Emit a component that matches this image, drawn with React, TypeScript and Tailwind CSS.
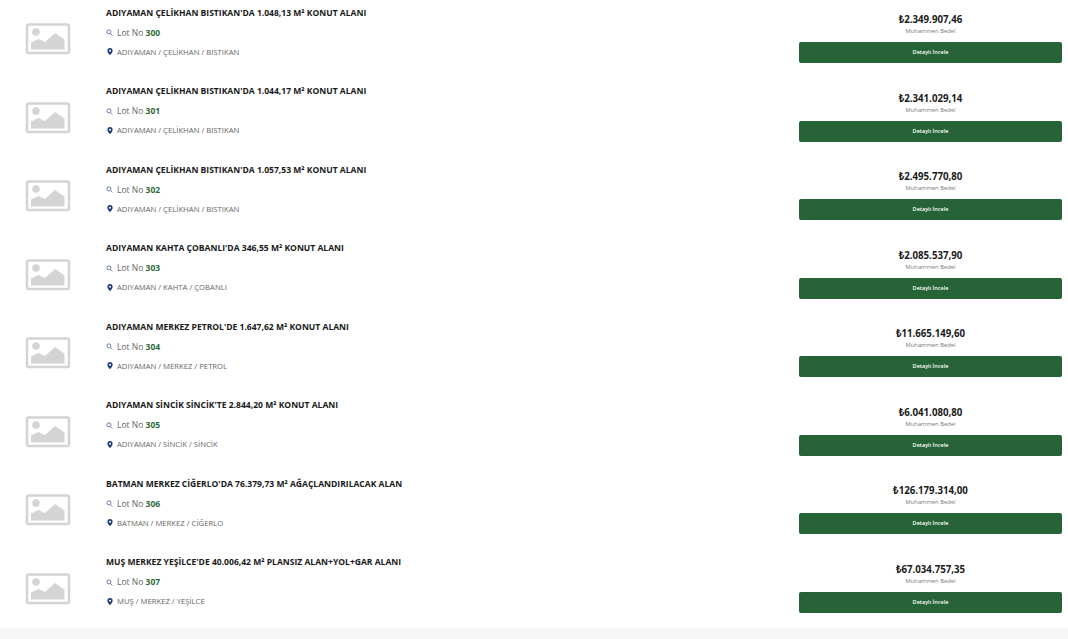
import React from "react";

const rows = [
  ["ADIYAMAN ÇELİKHAN BISTIKAN'DA 1.048,13 M² KONUT ALANI", "300", "ADIYAMAN / ÇELİKHAN / BISTIKAN", "2.349.907,46"],
  ["ADIYAMAN ÇELİKHAN BISTIKAN'DA 1.044,17 M² KONUT ALANI", "301", "ADIYAMAN / ÇELİKHAN / BISTIKAN", "2.341.029,14"],
  ["ADIYAMAN ÇELİKHAN BISTIKAN'DA 1.057,53 M² KONUT ALANI", "302", "ADIYAMAN / ÇELİKHAN / BISTIKAN", "2.495.770,80"],
  ["ADIYAMAN KAHTA ÇOBANLI'DA 346,55 M² KONUT ALANI", "303", "ADIYAMAN / KAHTA / ÇOBANLI", "2.085.537,90"],
  ["ADIYAMAN MERKEZ PETROL'DE 1.647,62 M² KONUT ALANI", "304", "ADIYAMAN / MERKEZ / PETROL", "11.665.149,60"],
  ["ADIYAMAN SİNCİK SİNCİK'TE 2.844,20 M² KONUT ALANI", "305", "ADIYAMAN / SİNCİK / SİNCİK", "6.041.080,80"],
  ["BATMAN MERKEZ CİĞERLO'DA 76.379,73 M² AĞAÇLANDIRILACAK ALAN", "306", "BATMAN / MERKEZ / CİĞERLO", "126.179.314,00"],
  ["MUŞ MERKEZ YEŞİLCE'DE 40.006,42 M² PLANSIZ ALAN+YOL+GAR ALANI", "307", "MUŞ / MERKEZ / YEŞİLCE", "67.034.757,35"],
];

function Placeholder() {
  return (
    <svg width="46" height="32" viewBox="0 0 46 32" className="block">
      <rect x="2" y="1.500" width="42" height="28.500" rx="1.500" fill="#fff" stroke="#d4d4d4" strokeWidth="2.500" />
      <circle cx="11" cy="9" r="3.800" fill="#d4d4d4" />
      <path d="M6 26.500V19.500L13.500 16 20 19 30 10l9.500 6.500v10z" fill="#d4d4d4" />
    </svg>
  );
}

function Row({ title, lot, place, price }: { title: string; lot: string; place: string; price: string }) {
  return (
    <div className="flex h-[78.5px] items-start bg-white">
      <div className="flex w-[106px] shrink-0 pl-[25px] pt-[23px]">
        <Placeholder />
      </div>
      <div className="flex min-w-0 flex-1 flex-col pt-[6.5px]">
        <div className="h-[12px] text-[8.55px] font-bold leading-[12px] text-[#1a1a1a]">{title}</div>
        <div className="mt-[8px] flex h-[12px] items-center text-[8.5px] leading-[12px] text-[#666]">
          <svg width="7" height="7" viewBox="0 0 24 24" fill="none" stroke="#5b6b9a" strokeWidth="3" className="mr-[4px]">
            <circle cx="10" cy="10" r="7" />
            <path d="M15.5 15.5 22 22" />
          </svg>
          <span>Lot No&nbsp;</span>
          <span className="font-bold text-[#2c6b3c]">{lot}</span>
        </div>
        <div className="mt-[7px] flex h-[12px] items-center text-[7.7px] leading-[12px] text-[#666]">
          <svg width="6" height="7" viewBox="0 0 24 28" className="ml-[1px] mr-[4px]">
            <path fillRule="evenodd" d="M12 0a10.500 10.500 0 0 0-10.500 10.500C1.500 18 12 28 12 28s10.500-10 10.500-17.500A10.500 10.500 0 0 0 12 0zm0 14.500a4 4 0 1 1 0-8 4 4 0 0 1 0 8z" fill="#1f3f78" />
          </svg>
          <span>{place}</span>
        </div>
      </div>
      <div className="mr-[6px] flex w-[263px] shrink-0 flex-col items-center pt-[13px]">
        <div className="h-[13px] text-[9.7px] font-bold leading-[13px] text-[#1a1a1a]">
          <span className="font-['Noto_Sans',sans-serif]">₺</span>
          {price}
        </div>
        <div className="mt-[1px] h-[9px] text-[5.8px] leading-[9px] text-[#777]">Muhammen Bedel</div>
        <button className="mt-[6px] flex h-[21px] w-full items-center justify-center rounded-[2px] bg-[#266336] text-[5.5px] font-semibold text-white">
          Detaylı İncele
        </button>
      </div>
    </div>
  );
}

export default function App() {
  return (
    <div className="flex min-h-[639px] flex-col bg-[#f7f7f7] font-['Open_Sans',sans-serif]">
      <div className="h-[627.5px]">
        {rows.map((r) => (
          <Row key={r[1]} title={r[0]} lot={r[1]} place={r[2]} price={r[3]} />
        ))}
      </div>
    </div>
  );
}
